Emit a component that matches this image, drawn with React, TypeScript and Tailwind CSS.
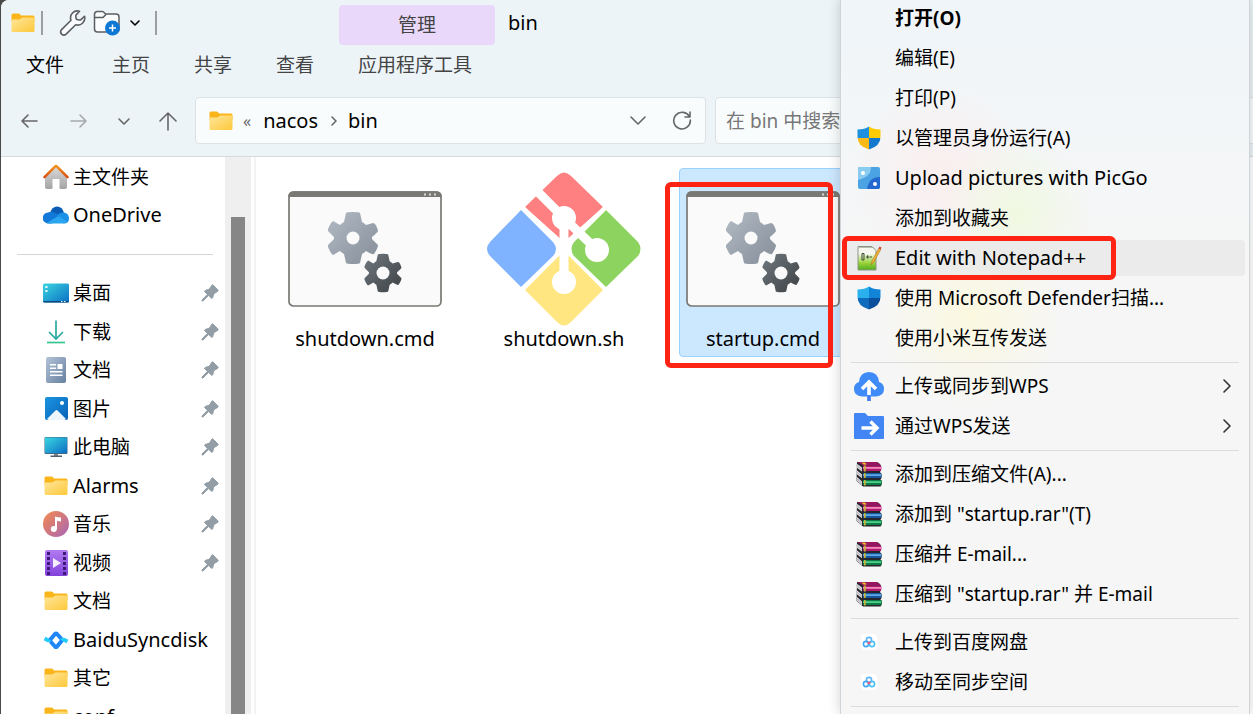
import React from "react";

const FONT = "font-['Noto_Sans','Noto_Sans_CJK_SC',sans-serif]";

// latin-only labels are set one step larger than chinese ones
const textSize = (text: string) => (/^[\x20-\x7e]+$/.test(text) ? "text-xl" : "text-[19px]");

function FolderIcon({ id }: { id: string }) {
  return (
    <svg viewBox="0 0 24 20" className="w-6 h-5">
      <defs>
        <linearGradient id={id} x1="0" y1="0" x2="1" y2="1">
          <stop offset="0" stopColor="#ffe69c" />
          <stop offset="1" stopColor="#fdc93a" />
        </linearGradient>
      </defs>
      <path d="M.5 2q0-1.5 1.5-1.5h5.500q1 0 1.500.7l1 1.300H22q1.500 0 1.500 1.500V9H.5z" fill="#f9b519" />
      <path d="M.5 6.500h7.500q1 0 1.700-.7l.8-.9q.5-.4 1.200-.4H23.500V17.500q0 1.500-1.500 1.500H2q-1.500 0-1.500-1.500z" fill={`url(#${id})`} />
    </svg>
  );
}

function HomeIcon() {
  return (
    <svg viewBox="0 0 26 26" className="w-[26px] h-[26px]">
      <defs>
        <linearGradient id="homeWall" x1="0" y1="0" x2="0" y2="1">
          <stop offset="0" stopColor="#dcdcdc" />
          <stop offset="1" stopColor="#a3a3a3" />
        </linearGradient>
        <linearGradient id="homeRoof" x1="0" y1="0" x2="0" y2="1">
          <stop offset="0" stopColor="#f7931e" />
          <stop offset="1" stopColor="#d84f12" />
        </linearGradient>
      </defs>
      <path d="M2 12 13 2l11 10v11q0 2-2 2h-4.500q-1 0-1-1v-8q0-1-1-1h-5q-1 0-1 1v8q0 1-1 1H4q-2 0-2-2z" fill="url(#homeWall)" />
      <path d="M1.500 13.200 12 2.600q1-1 2 0l10.500 10.600" fill="none" stroke="url(#homeRoof)" strokeWidth="2.600" strokeLinecap="round" />
    </svg>
  );
}

function CloudIcon() {
  return (
    <svg viewBox="0 0 26 18" className="w-[26px] h-[18px]">
      <path d="M7 7Q9 .5 14 .5q5.500 0 7 6.500L14 12z" fill="#0a5cb5" />
      <path d="M5.500 17.500A5.500 5.500 0 0 1 5 6.500q3.500-1.500 7 .5l5 3-8 7.500z" fill="#1279d8" />
      <path d="M14 9q3-3 7-2.500Q26 7.500 26 12.500q0 5-5.500 5z" fill="#1b90e6" />
      <path d="m3.500 17 11-6.500q1-.5 2 0l7.500 5q-1 2-3.500 2H6q-1.500 0-2.500-.5z" fill="#2aa5ee" />
    </svg>
  );
}

function DesktopIcon() {
  return (
    <svg viewBox="0 0 26 20" className="w-[26px] h-5">
      <defs>
        <linearGradient id="screen" x1="0" y1="0" x2="1" y2="1">
          <stop offset="0" stopColor="#3ad6e0" />
          <stop offset="1" stopColor="#0b6fc4" />
        </linearGradient>
      </defs>
      <rect y=".5" width="26" height="19" rx="1.500" fill="url(#screen)" />
      <path d="M0 18h26q0 1.500-1.500 1.500h-23Q0 19.500 0 18z" fill="#0b4a80" />
      <path d="M2.300 3h2.200v2H2.300zM2.300 7h2.200v2H2.300zM18 18h1.500v1H18zM21 18h1.500v1H21z" fill="#e9fbff" />
    </svg>
  );
}

function DownloadIcon() {
  return (
    <svg viewBox="0 0 20 24" className="w-5 h-6" fill="none" strokeWidth="1.700">
      <path d="M10 .5V19M3 12l7 7 7-7" stroke="#27aaa0" />
      <path d="M1 22.500h18" stroke="#35c78d" />
    </svg>
  );
}

function DocIcon() {
  return (
    <svg viewBox="0 0 20 26" className="w-5 h-[26px]">
      <defs>
        <linearGradient id="doc" x1="0" y1="0" x2="1" y2="1">
          <stop offset="0" stopColor="#b3c3d8" />
          <stop offset="1" stopColor="#6580a0" />
        </linearGradient>
      </defs>
      <rect width="20" height="26" rx="2" fill="url(#doc)" />
      <path d="M4 7h6v1.500H4zM4 10.500h6V12H4zM11.500 7H16.500v5H11.500zM4 14h12.500v1.500H4zM4 17.500h12.500V19H4z" fill="#fff" />
    </svg>
  );
}

function PictureIcon() {
  return (
    <svg viewBox="0 0 23 23" className="w-[23px] h-[23px]">
      <defs>
        <linearGradient id="pic" x1="0" y1="0" x2="1" y2="1">
          <stop offset="0" stopColor="#1a94e0" />
          <stop offset="1" stopColor="#0862b8" />
        </linearGradient>
      </defs>
      <rect width="23" height="23" rx="2" fill="url(#pic)" />
      <path d="m2 22 8.500-8.500q1-1 2 0L21 22q-1 1-2 1H4q-1 0-2-1z" fill="#eef6fd" />
      <circle cx="17" cy="6" r="2" fill="#fff" />
    </svg>
  );
}

function ComputerIcon() {
  return (
    <svg viewBox="0 0 24 22" className="w-6 h-[22px]">
      <path d="M10 17h4v3h-4z" fill="#7d8790" />
      <path d="M6.500 19.500h11.500v1.500H6.500z" fill="#545e68" />
      <rect x=".5" y="1" width="23" height="17" rx="1" fill="#43698a" />
      <rect x="1" y="1.500" width="22" height="15.500" fill="url(#screen)" />
    </svg>
  );
}

function MusicIcon() {
  return (
    <svg viewBox="0 0 26 26" className="w-[26px] h-[26px]">
      <defs>
        <linearGradient id="music" x1="0" y1="0" x2="1" y2="1">
          <stop offset="0" stopColor="#f58a4b" />
          <stop offset="1" stopColor="#a866b8" />
        </linearGradient>
      </defs>
      <circle cx="13" cy="13" r="13" fill="url(#music)" />
      <circle cx="10.800" cy="18" r="3" fill="#fff" />
      <path d="M12 5.500q3 1 6 1v4q-2 0-4-.8V18h-2z" fill="#fff" />
    </svg>
  );
}

function VideoIcon() {
  return (
    <svg viewBox="0 0 23 26" className="w-[23px] h-[26px]">
      <defs>
        <linearGradient id="video" x1="0" y1="0" x2="0" y2="1">
          <stop offset="0" stopColor="#b07af0" />
          <stop offset="1" stopColor="#8443dd" />
        </linearGradient>
      </defs>
      <rect width="23" height="26" rx="2" fill="url(#video)" />
      <path d="M3.500 2v23M19.500 2v23" stroke="#3c1a78" strokeWidth="3" strokeDasharray="3 2" />
      <path d="M8 8v10l8-5z" fill="#f4eefc" />
    </svg>
  );
}

function SyncDiskIcon() {
  return (
    <svg viewBox="0 0 24 20" className="w-6 h-5" fill="none" strokeWidth="4" strokeLinejoin="round">
      <path d="m.5 8.500 3 1.500q2 .7 3.500-1" stroke="#25cdf8" />
      <path d="m6 10 5-6q1-1 2 0l4.500 5" stroke="#1f86f8" />
      <path d="M17 11q1.500-1.700 3.500-1l3 1.500" stroke="#25cdf8" />
      <path d="m6.500 11.500 4.500 5q1 1 2 0l5-6" stroke="#1f86f8" />
    </svg>
  );
}

function PinIcon() {
  return (
    <svg viewBox="0 0 18 18" className="w-[18px] h-[18px]">
      <path
        d="M10.800 1.200q.7-.7 1.400 0l4.600 4.600q.8.800 0 1.500l-4 2.400-1.100 4q-.5 1.200-1.400.3L7.600 11.500 2 17H1v-1l5.400-5.600-2.500-2.600q-.8-.8.3-1.300l4.300-1.400z"
        fill="#929da5"
        stroke="#929da5"
        strokeLinejoin="round"
      />
    </svg>
  );
}

const GEAR =
  "M-7-25Q-6-26 0-26T7-25L9-16Q11-15 13-13L20-15Q23-15 25-7 25-6 19-1V1L25 7Q25 10 21 16 20 17 13 13 11 15 9 16L7 25Q6 26 0 26T-7 25L-9 16Q-11 15-13 13L-20 17Q-22 16-25 9V7L-19 1V-1L-25-7V-9Q-22-16-20-17L-13-13Q-11-15-9-16Z";

function CmdIcon({ id }: { id: string }) {
  return (
    <svg viewBox="0 0 154 116" className="w-[154px] h-[116px]">
      <defs>
        <linearGradient id={id + "a"} x1="0" y1="0" x2="1" y2="1">
          <stop offset="0" stopColor="#b2bbc4" />
          <stop offset="1" stopColor="#858e99" />
        </linearGradient>
        <linearGradient id={id + "b"} x1="0" y1="0" x2="1" y2="1">
          <stop offset="0" stopColor="#70797f" />
          <stop offset="1" stopColor="#3c4144" />
        </linearGradient>
      </defs>
      <rect x="1" y="1" width="152" height="114" rx="4.500" fill="#fafafa" stroke="#797874" strokeWidth="1.700" />
      <path d="M.2 6Q.2.2 6 .2h142q5.800 0 5.800 5.800H.2z" fill="#797874" />
      <path d="M136 2.500h2v2h-2zM141 2.500h2v2h-2zM146 2.500h2v2h-2z" fill="#d9d9d6" />
      <path d={GEAR} transform="translate(65 47)" fill={`url(#${id}a)`} />
      <circle cx="65" cy="47" r="6.500" fill="#fafafa" />
      <path d={GEAR} transform="translate(95 82) scale(.74)" fill={`url(#${id}b)`} />
      <circle cx="95" cy="82" r="6.500" fill="#fafafa" />
    </svg>
  );
}

function GitIcon() {
  return (
    <svg viewBox="0 0 154 154" className="w-[154px] h-[154px]">
      <path d="M38 35 70 4q7-7 14 0l32 31-39 35z" fill="#ff8080" />
      <path d="M34 38 3 70q-6 7 0 14l31 31 32-31q6-7 0-14z" fill="#80b3ff" />
      <path d="m119 38 32 32q5 7 0 14l-32 31-32-31q-5-7 0-14z" fill="#8dd35f" />
      <path d="m77 79 39 39-32 32q-7 7-14 0l-32-32z" fill="#ffe680" />
      <path d="m50 19 27 27v64M77 46l33 32" fill="none" stroke="#fff" strokeWidth="9" />
      <path d="m36 36 41 41 41-41" fill="none" stroke="#fff" strokeWidth="4" />
      <circle cx="77" cy="46" r="12" fill="#fff" />
      <circle cx="110" cy="78" r="12" fill="#fff" />
      <circle cx="77" cy="110" r="12" fill="#fff" />
    </svg>
  );
}

function UacShield() {
  return (
    <svg viewBox="0 0 24 24" className="w-6 h-6">
      <clipPath id="shield">
        <path d="M12 .5q4 3 11.500 3V11q0 9-11.500 12.500Q.5 20 .5 11V3.500Q8 3.500 12 .5z" />
      </clipPath>
      <g clipPath="url(#shield)">
        <path d="M0 0h12v12H0z" fill="#1e90e0" />
        <path d="M12 0h12v12H12z" fill="#ffcb05" />
        <path d="M0 12h12v12H0z" fill="#f9b916" />
        <path d="M12 12h12v12H12z" fill="#1279cf" />
      </g>
    </svg>
  );
}

function DefenderIcon() {
  return (
    <svg viewBox="0 0 24 24" className="w-6 h-6">
      <g clipPath="url(#shield)">
        <path d="M0 0h12v12H0z" fill="#2bb0ee" />
        <path d="M12 0h12v12H12z" fill="#1284d8" />
        <path d="M0 12h12v12H0z" fill="#0f6cbd" />
        <path d="M12 12h12v12H12z" fill="#0a4f9c" />
      </g>
    </svg>
  );
}

function PicGoIcon() {
  return (
    <svg viewBox="0 0 22 22" className="w-[22px] h-[22px]">
      <rect width="22" height="22" rx="2" fill="#4ba3e3" />
      <path d="M0 2q0-2 2-2h11q0 5-3 8t-10 5z" fill="#8accf0" />
      <path d="M22 10v10q0 2-2 2H9q1-6 4-9t9-3z" fill="#2469cf" />
      <circle cx="5" cy="6" r="2" fill="#fff" />
      <circle cx="17" cy="17" r="2" fill="#fff" />
    </svg>
  );
}

function NotepadIcon() {
  return (
    <svg viewBox="0 0 26 26" className="w-[26px] h-[26px]">
      <defs>
        <linearGradient id="npp" x1="0" y1="0" x2="0" y2="1">
          <stop offset=".3" stopColor="#f5f7ee" />
          <stop offset=".7" stopColor="#9bd33a" />
          <stop offset="1" stopColor="#4fae1c" />
        </linearGradient>
      </defs>
      <path d="M2 1.500h14l4 4V25H2z" fill="url(#npp)" stroke="#8e9388" />
      <path d="M3.500 2.500h14" stroke="#77856b" strokeDasharray="1 1" />
      <path d="M6 8.500h2v6.500H6zM10 12h3.500M11.700 10.200v3.500M14 12h2" fill="none" stroke="#3b4a30" />
      <path d="m15 20 1-4L23 3l2 1-7 13z" fill="#f2b233" stroke="#a8782a" strokeWidth=".6" />
      <path d="m22.500 3.500 1-2 2 1-1 2z" fill="#c44" />
    </svg>
  );
}

function WpsCloudIcon() {
  return (
    <svg viewBox="0 0 30 30" className="w-[30px] h-[30px]">
      <path d="M8 25.500Q0 25 0 18q0-5.500 5-7Q6 1 15 1t10 10q5 1.500 5 7 0 7-8 7.500z" fill="#3f8cf8" />
      <path d="m8 18 7-7 7 7M15 12v12" fill="none" stroke="#fff" strokeWidth="3.600" />
      <path d="M13.200 25h3.600v5h-3.600z" fill="#3f7bf0" />
    </svg>
  );
}

function WpsFolderIcon() {
  return (
    <svg viewBox="0 0 30 26" className="w-[30px] h-[26px]">
      <path d="M0 1q0-1 1-1h10l3 3h15q1 0 1 1v21q0 1-1 1H1q-1 0-1-1z" fill="#4285f5" />
      <path d="M7.500 15h14M16.500 8.500l6.500 6.500-6.500 6.500" fill="none" stroke="#fff" strokeWidth="3.400" />
    </svg>
  );
}

function RarIcon() {
  return (
    <svg viewBox="0 0 26 26" className="w-[26px] h-[26px]">
      <path d="M1 1h19q3 0 5 3.500V9l-1 2 1.500 2v4l-1 1.500 1 1.500v4l-1 1.500H7L.5 20z" fill="#26262c" />
      <path d="M1 1h18.500q3 0 5 3.500H7.500z" fill="#9a1560" />
      <path d="M7 4.500h18q1 2.500 0 5.500H7z" fill="#b01a6c" />
      <path d="M7 6h18.500v1.800H7z" fill="#f08abf" />
      <path d="M7 12h18q1 2.500 0 5H7z" fill="#17569c" />
      <path d="M7 13.200h18v1.800H7z" fill="#5fa9e8" />
      <path d="M7 19h18.500q.7 2.500 0 5H7z" fill="#0c7d42" />
      <path d="M7 20.200h18v1.800H7z" fill="#52cf8c" />
      <path d="M.5 2.500 6 6.500v4L.5 6.500zM.5 9 6 13.500v3.800L.5 13zM.5 15.500 6 20.500v4L.5 19.500z" fill="#dcdce0" />
      <path d="m.5 4.500 5.500 4M.5 11 6 15.500M.5 17.500 6 22.500" stroke="#8c8c94" strokeWidth=".6" />
      <path d="M8 4.500h1.700v6H8zM8 12h1.700v5H8zM8 19h1.700v5.500H8z" fill="#c9b23a" />
      <path d="m5.500 1.800 3-.3 2.500 1.700-3 .5z" fill="#e3c524" />
    </svg>
  );
}

function BaiduDiskIcon() {
  return (
    <svg viewBox="0 0 16 16" className="w-4 h-4" fill="none" strokeWidth="1.600">
      <rect width="16" height="16" rx="4" fill="#fff" />
      <circle cx="8" cy="6" r="2.600" stroke="#5fb4f2" />
      <circle cx="5" cy="10" r="2.600" stroke="#3fa9f5" />
      <circle cx="11" cy="10" r="2.600" stroke="#4cc3f5" />
      <path d="m6.500 8 1.500 1.500L9.500 8" stroke="#ef5a78" />
    </svg>
  );
}

type LineProps = { d: string; className: string };

function Line({ d, className }: LineProps) {
  return (
    <svg viewBox="0 0 20 20" className={className} fill="none" stroke="currentColor" strokeWidth="1.600" strokeLinecap="round" strokeLinejoin="round">
      <path d={d} />
    </svg>
  );
}

const quickAccess = [
  { name: "桌面", icon: <DesktopIcon />, pinned: true },
  { name: "下载", icon: <DownloadIcon />, pinned: true },
  { name: "文档", icon: <DocIcon />, pinned: true },
  { name: "图片", icon: <PictureIcon />, pinned: true },
  { name: "此电脑", icon: <ComputerIcon />, pinned: true },
  { name: "Alarms", icon: <FolderIcon id="f1" />, pinned: true },
  { name: "音乐", icon: <MusicIcon />, pinned: true },
  { name: "视频", icon: <VideoIcon />, pinned: true },
  { name: "文档", icon: <FolderIcon id="f2" /> },
  { name: "BaiduSyncdisk", icon: <SyncDiskIcon /> },
  { name: "其它", icon: <FolderIcon id="f3" /> },
  { name: "conf", icon: <FolderIcon id="f4" /> },
];

type MenuItem = {
  label: string;
  icon?: React.ReactNode;
  bold?: boolean;
  active?: boolean;
  submenu?: boolean;
};

const menuGroups: MenuItem[][] = [
  [
    { label: "打开(O)", bold: true },
    { label: "编辑(E)" },
    { label: "打印(P)" },
    { label: "以管理员身份运行(A)", icon: <UacShield /> },
    { label: "Upload pictures with PicGo", icon: <PicGoIcon /> },
    { label: "添加到收藏夹" },
    { label: "Edit with Notepad++", icon: <NotepadIcon />, active: true },
    { label: "使用 Microsoft Defender扫描...", icon: <DefenderIcon /> },
    { label: "使用小米互传发送" },
  ],
  [
    { label: "上传或同步到WPS", icon: <WpsCloudIcon />, submenu: true },
    { label: "通过WPS发送", icon: <WpsFolderIcon />, submenu: true },
  ],
  [
    { label: "添加到压缩文件(A)...", icon: <RarIcon /> },
    { label: '添加到 "startup.rar"(T)', icon: <RarIcon /> },
    { label: "压缩并 E-mail...", icon: <RarIcon /> },
    { label: '压缩到 "startup.rar" 并 E-mail', icon: <RarIcon /> },
  ],
  [
    { label: "上传到百度网盘", icon: <BaiduDiskIcon /> },
    { label: "移动至同步空间", icon: <BaiduDiskIcon /> },
  ],
];

function TitleBar() {
  return (
    <div className="flex h-[45px] items-center">
      <div className="flex w-[338px] shrink-0 items-center pl-[10px]">
        <FolderIcon id="f5" />
        <span className="ml-1.5 h-6 w-0.5 bg-[#9a9fa2]" />
        <button aria-label="属性" className="ml-4">
          <svg viewBox="0 0 28 28" className="w-7 h-7" fill="#fafcfd" stroke="#5c5f61" strokeWidth="1.600" strokeLinejoin="round">
            <path d="M20.500 2.300q-4-1.300-7 1.700-3 3-1.500 7.200L2.600 20.600q-2 2.300 0 4.500 2.300 2 4.500 0l9.600-9.400q4 1.300 7-1.700t1.800-6.800l-3.800 3.700q-2.500.3-4.300-.6-.8-2-.5-4.200z" />
          </svg>
        </button>
        <button aria-label="新建文件夹" className="ml-1.5">
          <svg viewBox="0 0 28 28" className="w-7 h-7">
            <path d="M4.500 2.500h5q1 0 2 1.500l1 1h10.500q3 0 3 3v12q0 3-3 3H4.500q-3 0-3-3V5.500q0-3 3-3zM2 8.500h8l3-3" fill="#fafcfd" stroke="#5c5f61" strokeWidth="1.500" />
            <circle cx="19.500" cy="19" r="7.500" fill="#0f78d4" />
            <path d="M19.500 15.500v7M16 19h7" stroke="#fff" strokeWidth="1.500" />
          </svg>
        </button>
        <button aria-label="自定义快速访问工具栏" className="ml-1 text-black">
          <Line d="m6 8 4 4 4-4" className="w-5 h-5" />
        </button>
        <span className="ml-2.5 h-6 w-0.5 bg-[#9a9fa2]" />
      </div>
      <button className="h-10 w-[156px] shrink-0 self-end rounded-sm bg-[#e9d8fa] text-[#444]">管理</button>
      <h1 className="ml-[13px] text-xl text-black">bin</h1>
    </div>
  );
}

function Ribbon() {
  return (
    <nav className="flex h-10 items-center pl-[3px] text-[#444]">
      <button className="mr-1 px-[22px] text-black">文件</button>
      <button className="px-[22px]">主页</button>
      <button className="px-[22px]">共享</button>
      <button className="px-[22px]">查看</button>
      <button className="px-[22px]">应用程序工具</button>
    </nav>
  );
}

function AddressRow() {
  return (
    <div className="flex items-center border-b border-[#d5dce1] py-3 text-[#666]">
      <div className="flex w-[194px] shrink-0 items-center gap-6 pl-[17px]">
        <button aria-label="后退">
          <Line d="M17 10H2M8 4l-6 6 6 6" className="w-6 h-5" />
        </button>
        <button aria-label="前进" className="text-[#a5a9ab]">
          <Line d="M3 10h15M12 4l6 6-6 6" className="w-6 h-5" />
        </button>
        <button aria-label="最近浏览的位置">
          <Line d="m5 8 5 5 5-5" className="w-5 h-5" />
        </button>
        <button aria-label="上移">
          <Line d="M10 19V2M2 10l8-8 8 8" className="w-5 h-5" />
        </button>
      </div>
      <div className="flex h-[47px] w-[511px] shrink-0 items-center rounded border border-[#dde2e5] bg-[#f9fcfd] px-[13px]">
        <FolderIcon id="f6" />
        <span className="ml-2.5 text-base">«</span>
        <a href="#nacos" className="ml-3 text-xl text-black">nacos</a>
        <Line d="m8 6 4 4-4 4" className="ml-1.5 mr-1 w-5 h-5" />
        <a href="#bin" className="text-xl text-black">bin</a>
        <button aria-label="历史记录" className="ml-auto">
          <Line d="m3 6 7 7 7-7" className="w-5 h-5" />
        </button>
        <button aria-label="刷新" className="ml-6">
          <Line d="M17.500 6A8.300 8.300 0 1 0 18.300 9M18 1v5h-5" className="w-5 h-5" />
        </button>
      </div>
      <input
        aria-label="搜索"
        placeholder="在 bin 中搜索"
        className="-mr-5 ml-[9px] h-[47px] min-w-0 flex-1 rounded border border-[#dde2e5] bg-[#f9fcfd] px-2.5 placeholder:text-[#777]"
      />
    </div>
  );
}

function Sidebar() {
  return (
    <aside className="w-[224px] shrink-0 pt-px">
      <a href="#home" className="flex h-[38px] items-center gap-1 pl-[42px]">
        <HomeIcon />
        主文件夹
      </a>
      <a href="#onedrive" className="flex h-[38px] items-center gap-1 pl-[42px] text-xl">
        <CloudIcon />
        OneDrive
      </a>
      <hr className="mb-[19px] ml-4 mr-3 mt-5 border-[#d6d6d6]" />
      <ul className="grid h-[462px] auto-rows-fr">
        {quickAccess.map((item, i) => (
          <li key={i} className="flex items-center pl-[42px] pr-1.5">
            <a href={`#${item.name}`} className={`flex items-center gap-1 ${textSize(item.name)}`}>
              <span className="flex w-[26px] justify-center">{item.icon}</span>
              {item.name}
            </a>
            {item.pinned && (
              <span className="ml-auto">
                <PinIcon />
              </span>
            )}
          </li>
        ))}
      </ul>
    </aside>
  );
}

function FileTile({ name, selected, children }: { name: string; selected?: boolean; children: React.ReactNode }) {
  return (
    <figure
      className={`relative flex w-[168px] shrink-0 flex-col items-center rounded-sm border pb-1 pt-[3px] ${
        selected ? "border-[#99d1ff] bg-[#cce8ff]" : "border-transparent"
      }`}
    >
      <div className="flex h-[154px] items-center">{children}</div>
      <figcaption className="text-xl leading-[26px]">{name}</figcaption>
      {/* highlight frame */}
      {selected && (
        <span className="absolute -left-[15px] top-[13px] h-[186px] w-[168px] rounded-md border-[5px] border-[#ff2314]" />
      )}
    </figure>
  );
}

function ContextMenu() {
  return (
    <div
      role="menu"
      className="absolute -top-0.5 left-[840px] right-[3px] min-h-[calc(100%+2px)] border-x border-[#cfd4d8] bg-[#f6f6f6] bg-[radial-gradient(circle_at_175px_215px,#f0f8e0_0,transparent_75px),radial-gradient(circle_at_130px_320px,#fbf8df_0,transparent_90px),radial-gradient(circle_at_100px_175px,#faeeee_0,transparent_90px),linear-gradient(to_bottom,#f0f5f9_0,#f3f6f8_120px,#f6f6f6_260px)] px-1 shadow-[0_0_12px_rgba(0,0,0,0.18)]"
    >
      {menuGroups.map((group, g) => (
        <div key={g}>
          {group.map((item) => (
            <div key={item.label} className="relative py-0.5">
              <button
                role="menuitem"
                className={`flex h-9 w-full items-center gap-2.5 rounded px-2 text-left text-black ${textSize(item.label)} ${
                  item.active ? "bg-[#e8e8e8]/80" : ""
                } ${item.bold ? "font-bold" : ""}`}
              >
                <span className="flex w-8 shrink-0 justify-center">{item.icon}</span>
                {item.label}
                {item.submenu && <Line d="m7 4 6 6-6 6" className="ml-auto w-5 h-5 text-[#333]" />}
              </button>
              {item.active && (
                <span className="absolute -left-[3px] -top-0.5 h-11 w-[274px] rounded-md border-[5px] border-[#ff2314]" />
              )}
            </div>
          ))}
          <hr className="mx-1.5 mb-[3px] mt-1 border-[#dcdcdc]" />
        </div>
      ))}
    </div>
  );
}

export default function App() {
  return (
    <div className={`relative h-screen w-full overflow-hidden bg-[#4a4a4a] text-[19px] leading-7 text-black ${FONT}`}>
      <div className="ml-px flex h-full flex-col overflow-hidden rounded-tl-lg bg-white">
        <header className="bg-[#ecf4f8]">
          <TitleBar />
          <Ribbon />
          <AddressRow />
        </header>
        <div className="flex min-h-0 flex-1">
          <Sidebar />
          <div className="w-[26px] shrink-0 bg-[#efefef] px-1.5 pt-[60px]">
            <div className="h-full bg-[#868686]" />
          </div>
          <main className="ml-[3px] flex min-w-0 flex-1 items-start gap-[31px] border-l-2 border-[#f3f3f3] pl-[25px] pt-[11px]">
            <FileTile name="shutdown.cmd">
              <CmdIcon id="c1" />
            </FileTile>
            <FileTile name="shutdown.sh">
              <GitIcon />
            </FileTile>
            <FileTile name="startup.cmd" selected>
              <CmdIcon id="c2" />
            </FileTile>
          </main>
        </div>
      </div>
      <ContextMenu />
    </div>
  );
}
